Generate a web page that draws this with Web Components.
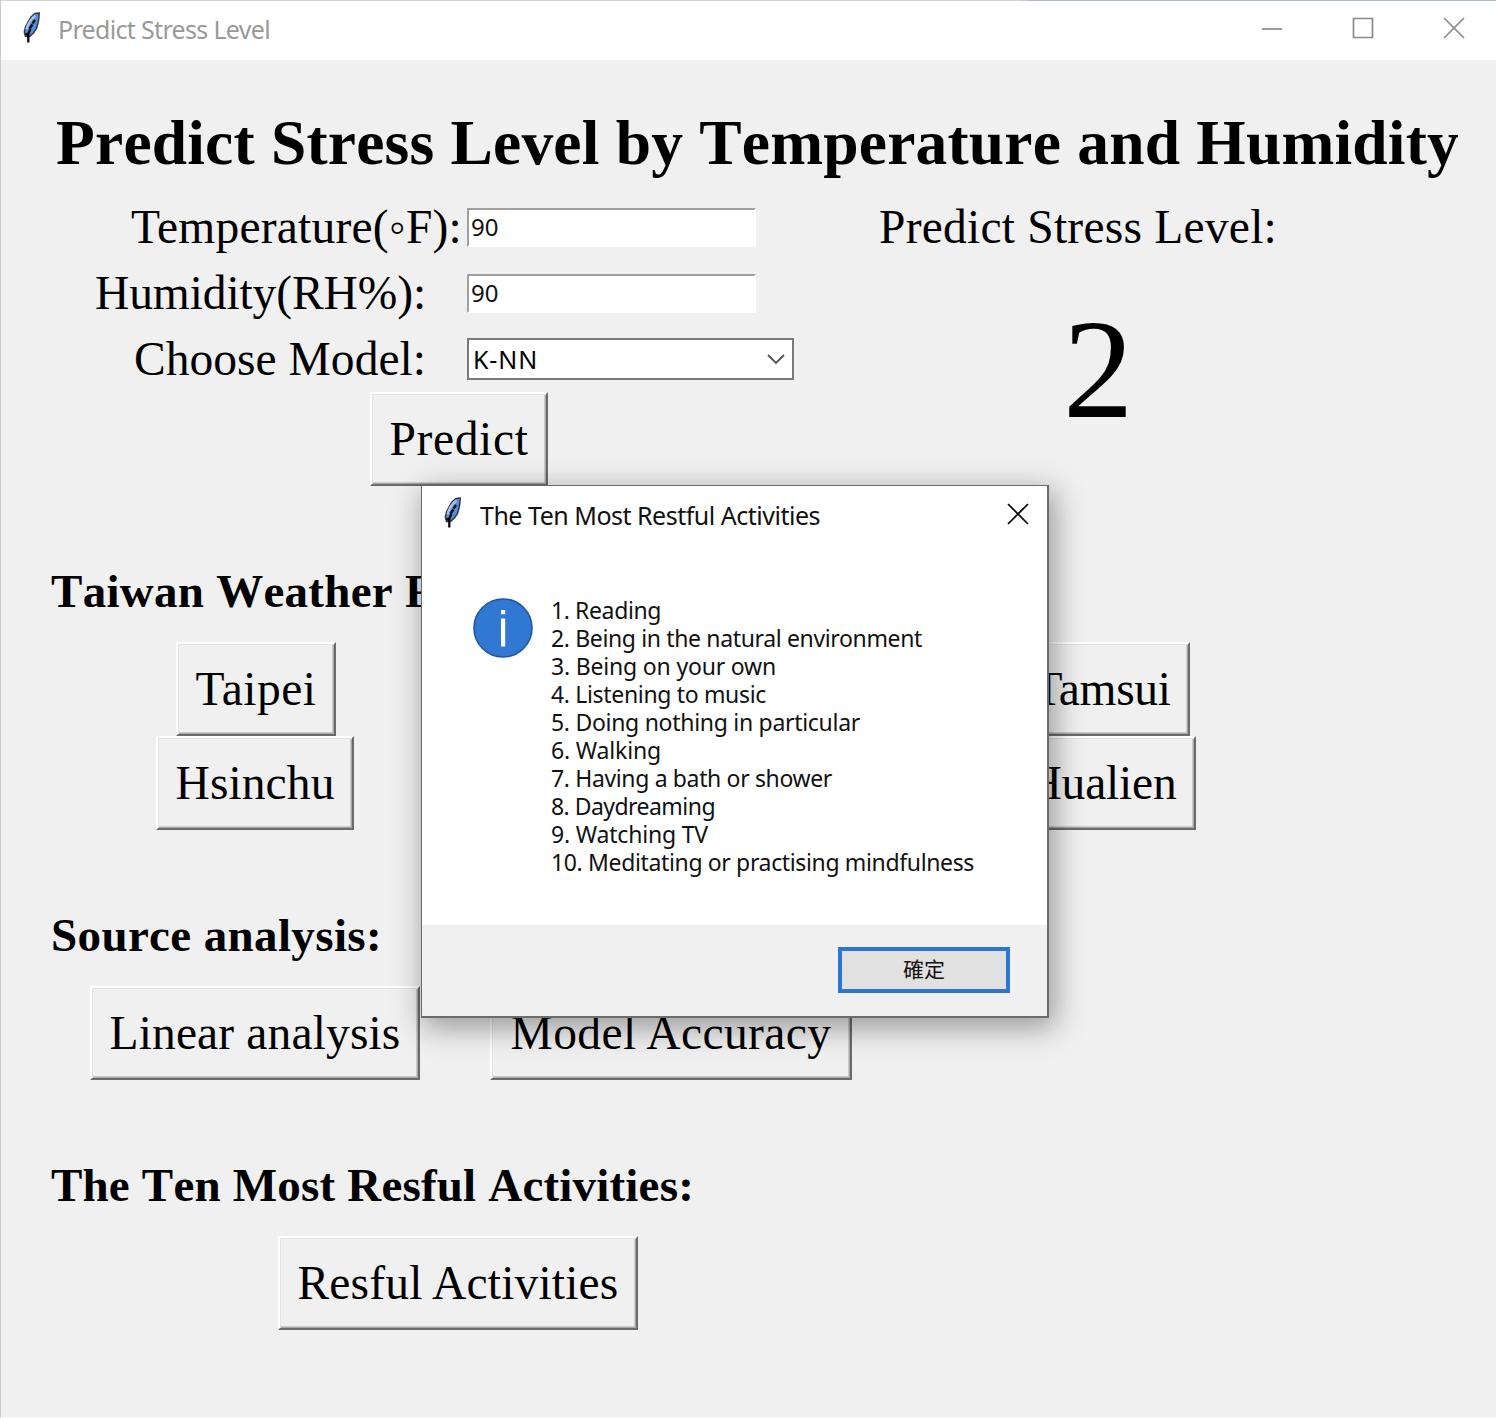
<!DOCTYPE html>
<html lang="en"><head><meta charset="utf-8"><title>Predict Stress Level</title>
<style>html,body{margin:0;padding:0;width:1496px;height:1418px;overflow:hidden;background:#f0f0f0;font-kerning:none}</style></head>
<body><stress-app></stress-app>
<script>
const define=(name,html,connected)=>customElements.define(name,class extends HTMLElement{
  constructor(){super();this.attachShadow({mode:'open'}).innerHTML=html;}
  connectedCallback(){if(connected)connected.call(this,this.shadowRoot);}
});
const SERIF='"Liberation Serif",serif', SANS='"Noto Sans","Noto Sans CJK TC",sans-serif';

// Text run tracked to a given advance width
define('ui-text',`<style>:host{display:block;white-space:pre;flex:none}span{display:inline-block}</style><span><slot></slot></span>`,function(r){
  const span=r.querySelector('span'),w=+this.getAttribute('w');
  if(w){const n=span.getBoundingClientRect().width;
    span.style.letterSpacing=(w-n)/this.textContent.length+'px';this.style.width=w+'px';}
});
define('tk-button',`<style>:host{display:flex;box-sizing:border-box;height:94px;flex:none;align-items:center;justify-content:center;
  font:47.5px/60px ${SERIF};background:#f0f0f0;border:2px solid;border-color:#fff #6b6b6b #6b6b6b #fff;
  box-shadow:inset 1px 1px #e3e3e3,inset -1.5px -1.5px #a8a8a8;color:#000}</style><slot></slot>`,function(){this.style.width=this.getAttribute('width')+'px';});
define('tk-entry',`<style>:host{display:flex;box-sizing:border-box;width:289px;height:39px;align-items:center;background:#fff;
  border:2px solid;border-color:#a0a0a0 #fff #fff #a0a0a0;padding-left:2px;font:24px/30px ${SANS};color:#111}</style><slot></slot>`);
define('tk-combobox',`<style>:host{display:flex;box-sizing:border-box;width:327px;height:42px;align-items:center;justify-content:space-between;background:#fff;
  border:2px solid #7a7a7a;padding:0 7px 0 4px;font:25px/30px ${SANS};color:#000}svg{display:block}</style><slot></slot>
  <svg width="18" height="12" viewBox="0 0 18 12" fill="none" stroke="#555" stroke-width="1.9"><path d="M1 2l8 8 8-8"/></svg>`);
define('tk-feather',`<style>:host{display:block;flex:none;width:20px;height:34px}svg{display:block}</style>
<svg width="20" height="34" viewBox="0 0 20 34"><path d="M17.200 2L13 2.500L9 6L6 11L3.500 16L2.300 21L3.500 25.500L7.500 25.500L11.500 22L14.500 17.500L15.800 13L16.800 8Z" fill="#4f8ee0" stroke="#3a3a3a" stroke-width="1.500"/><path d="M13.500 4.500C9.500 7.500 6 12.500 4.500 18.500" stroke="#a4c4e8" stroke-width="2.300" fill="none"/><path d="M13 9L10.500 12.500M10.500 13.500L7.500 17.500M8.500 18L6 23" stroke="#0a0a0a" stroke-width="2.300" fill="none"/><path d="M3.500 22.500L6 24.500M6.300 22V31.500" stroke="#000" stroke-width="2.200"/></svg>`);
define('win-glyph',`<style>:host{display:block;flex:none;width:22px;height:22px}svg{display:block;fill:none;stroke:currentColor;stroke-width:1.7}
 path{display:none}:host([kind=min]) .min,:host([kind=max]) .max,:host([kind=close]) .close{display:block}</style>
 <svg width="22" height="22" viewBox="0 0 22 22"><path class="min" d="M1 12H21"/><path class="max" d="M1.500 1.500H20.500V20.500H1.500Z"/><path class="close" d="M1 1L21 21M21 1L1 21"/></svg>`);
define('title-bar',`<style>:host{display:flex;box-sizing:border-box;height:60px;background:#fff;border-top:1px solid #d5d5d5;border-image:linear-gradient(90deg,#d5d5d5 68%,#aebbd2 69%) 1;border-width:1px 0 0;align-items:flex-start;padding:10px 31px 0 21px;font:25px/36px ${SANS};color:#999}
 .t{margin:0 0 0 16px;flex:1}.g{display:flex;margin-top:6px;gap:69px;color:#8a8a8a}</style>
 <tk-feather></tk-feather><div class="t"><slot></slot></div><div class="g"><win-glyph kind="min"></win-glyph><win-glyph kind="max"></win-glyph><win-glyph kind="close"></win-glyph></div>`);
define('form-row',`<style>:host{display:flex;height:66px;align-items:center;font:47.5px/60px ${SERIF}}.l{display:flex;box-sizing:border-box;width:466px;flex:none;justify-content:flex-end;padding-right:var(--gap,41px)}</style><div class="l"><slot name="label"></slot></div><slot></slot>`);
define('info-icon',`<style>:host{display:block;flex:none;width:60px;height:60px}svg{display:block}</style>
 <svg width="60" height="60" viewBox="0 0 60 60"><circle cx="30" cy="30" r="29" fill="#3078d2" stroke="#20589b" stroke-width="1.600"/><rect x="28" y="12" width="4.200" height="4.300" fill="#fff"/><rect x="28" y="20.500" width="4.200" height="28" fill="#fff"/></svg>`);
define('message-dialog',`<style>:host{display:flex;flex-direction:column;box-sizing:border-box;position:absolute;left:420px;top:485px;width:628px;height:533px;background:#fff;border:2px solid #6b6b6b;border-width:1.500px 2px 2px 1.500px;
 box-shadow:4px 8px 28px 2px rgba(0,0,0,.36);font:23px/28px ${SANS};color:#111}
 .h{display:flex;height:60px;padding:10px 18px 0 21px;box-sizing:border-box}.h ui-text{margin:5px 0 0 17px;font-size:25px}.h win-glyph{margin:7px 0 0 auto;color:#000}
 .b{display:flex;flex:1;padding:52px 0 0 51px;gap:18px}.list{margin-top:-2px}
 .f{display:flex;box-sizing:border-box;height:91px;background:#f0f0f0;justify-content:flex-end;align-items:flex-start;padding:22px 37px 0}
 .ok{display:flex;box-sizing:border-box;width:172px;height:46px;border:4px solid #2d75d3;background:#e1e1e1;align-items:center;justify-content:center;padding-bottom:5px;font:21px/30px "Noto Sans CJK TC",sans-serif}</style>
 <div class="h"><tk-feather></tk-feather><ui-text w="340">The Ten Most Restful Activities</ui-text><win-glyph kind="close"></win-glyph></div>
 <div class="b"><info-icon></info-icon><div class="list">
 <ui-text w="110">1. Reading</ui-text><ui-text w="371">2. Being in the natural environment</ui-text><ui-text w="225">3. Being on your own</ui-text><ui-text w="215">4. Listening to music</ui-text><ui-text w="309">5. Doing nothing in particular</ui-text><ui-text w="110">6. Walking</ui-text><ui-text w="281">7. Having a bath or shower</ui-text><ui-text w="164">8. Daydreaming</ui-text><ui-text w="157">9. Watching TV</ui-text><ui-text w="423">10. Meditating or practising mindfulness</ui-text></div></div>
 <div class="f"><div class="ok">確定</div></div>`);
define('stress-app',`<style>:host{display:block;box-sizing:border-box;width:1496px;height:1418px;background:#f0f0f0;font-family:${SERIF};color:#000;position:relative;overflow:hidden;border-left:1px solid #c8c8c8;border-bottom:1px solid #fafafa}
 .title{font-size:63.5px;line-height:70px;font-weight:700;padding:48px 0 0 55px;height:77px}
 .top{display:flex;height:198px;margin-top:9px}.form{width:878px;flex:none}
 .res{font-size:47.5px;line-height:66px}.two{font-size:141px;line-height:150px;margin:34px 0 0 184px}
 .row{display:flex;height:94px}.sec{font-size:47px;line-height:60px;font-weight:700;padding-left:50px;height:60px}</style>
 <title-bar><ui-text w="212">Predict Stress Level</ui-text></title-bar>
 <div class="title"><ui-text w="1403">Predict Stress Level by Temperature and Humidity</ui-text></div>
 <div class="top"><div class="form">
 <form-row style="--gap:5px"><ui-text slot="label" w="331">Temperature(◦F):</ui-text><tk-entry>90</tk-entry></form-row>
 <form-row><ui-text slot="label" w="331">Humidity(RH%):</ui-text><tk-entry>90</tk-entry></form-row>
 <form-row><ui-text slot="label" w="292">Choose Model:</ui-text><tk-combobox><ui-text w="65">K-NN</ui-text></tk-combobox></form-row></div>
 <div class="res"><ui-text w="398">Predict Stress Level:</ui-text><div class="two">2</div></div></div>
 <div class="row" style="padding-left:369px"><tk-button width="178"><ui-text w="139">Predict</ui-text></tk-button></div>
 <div class="sec" style="margin-top:75px"><ui-text w="383">Taiwan Weather F</ui-text></div>
 <div class="row" style="margin-top:21px;padding-left:175px;gap:678px"><tk-button width="160"><ui-text w="121">Taipei</ui-text></tk-button><tk-button width="176"><ui-text w="137">Tamsui</ui-text></tk-button></div>
 <div class="row" style="padding-left:155px;gap:654px"><tk-button width="198"><ui-text w="159">Hsinchu</ui-text></tk-button><tk-button width="188"><ui-text w="149">Hualien</ui-text></tk-button></div>
 <div class="sec" style="margin-top:75px"><ui-text w="331">Source analysis:</ui-text></div>
 <div class="row" style="margin-top:21px;padding-left:89px;gap:70px"><tk-button width="330"><ui-text w="291">Linear analysis</ui-text></tk-button><tk-button width="362"><ui-text w="321">Model Accuracy</ui-text></tk-button></div>
 <div class="sec" style="margin-top:75px"><ui-text w="643">The Ten Most Resful Activities:</ui-text></div>
 <div class="row" style="margin-top:21px;padding-left:277px"><tk-button width="360"><ui-text w="321">Resful Activities</ui-text></tk-button></div>
 <message-dialog></message-dialog>`);
</script></body></html>
